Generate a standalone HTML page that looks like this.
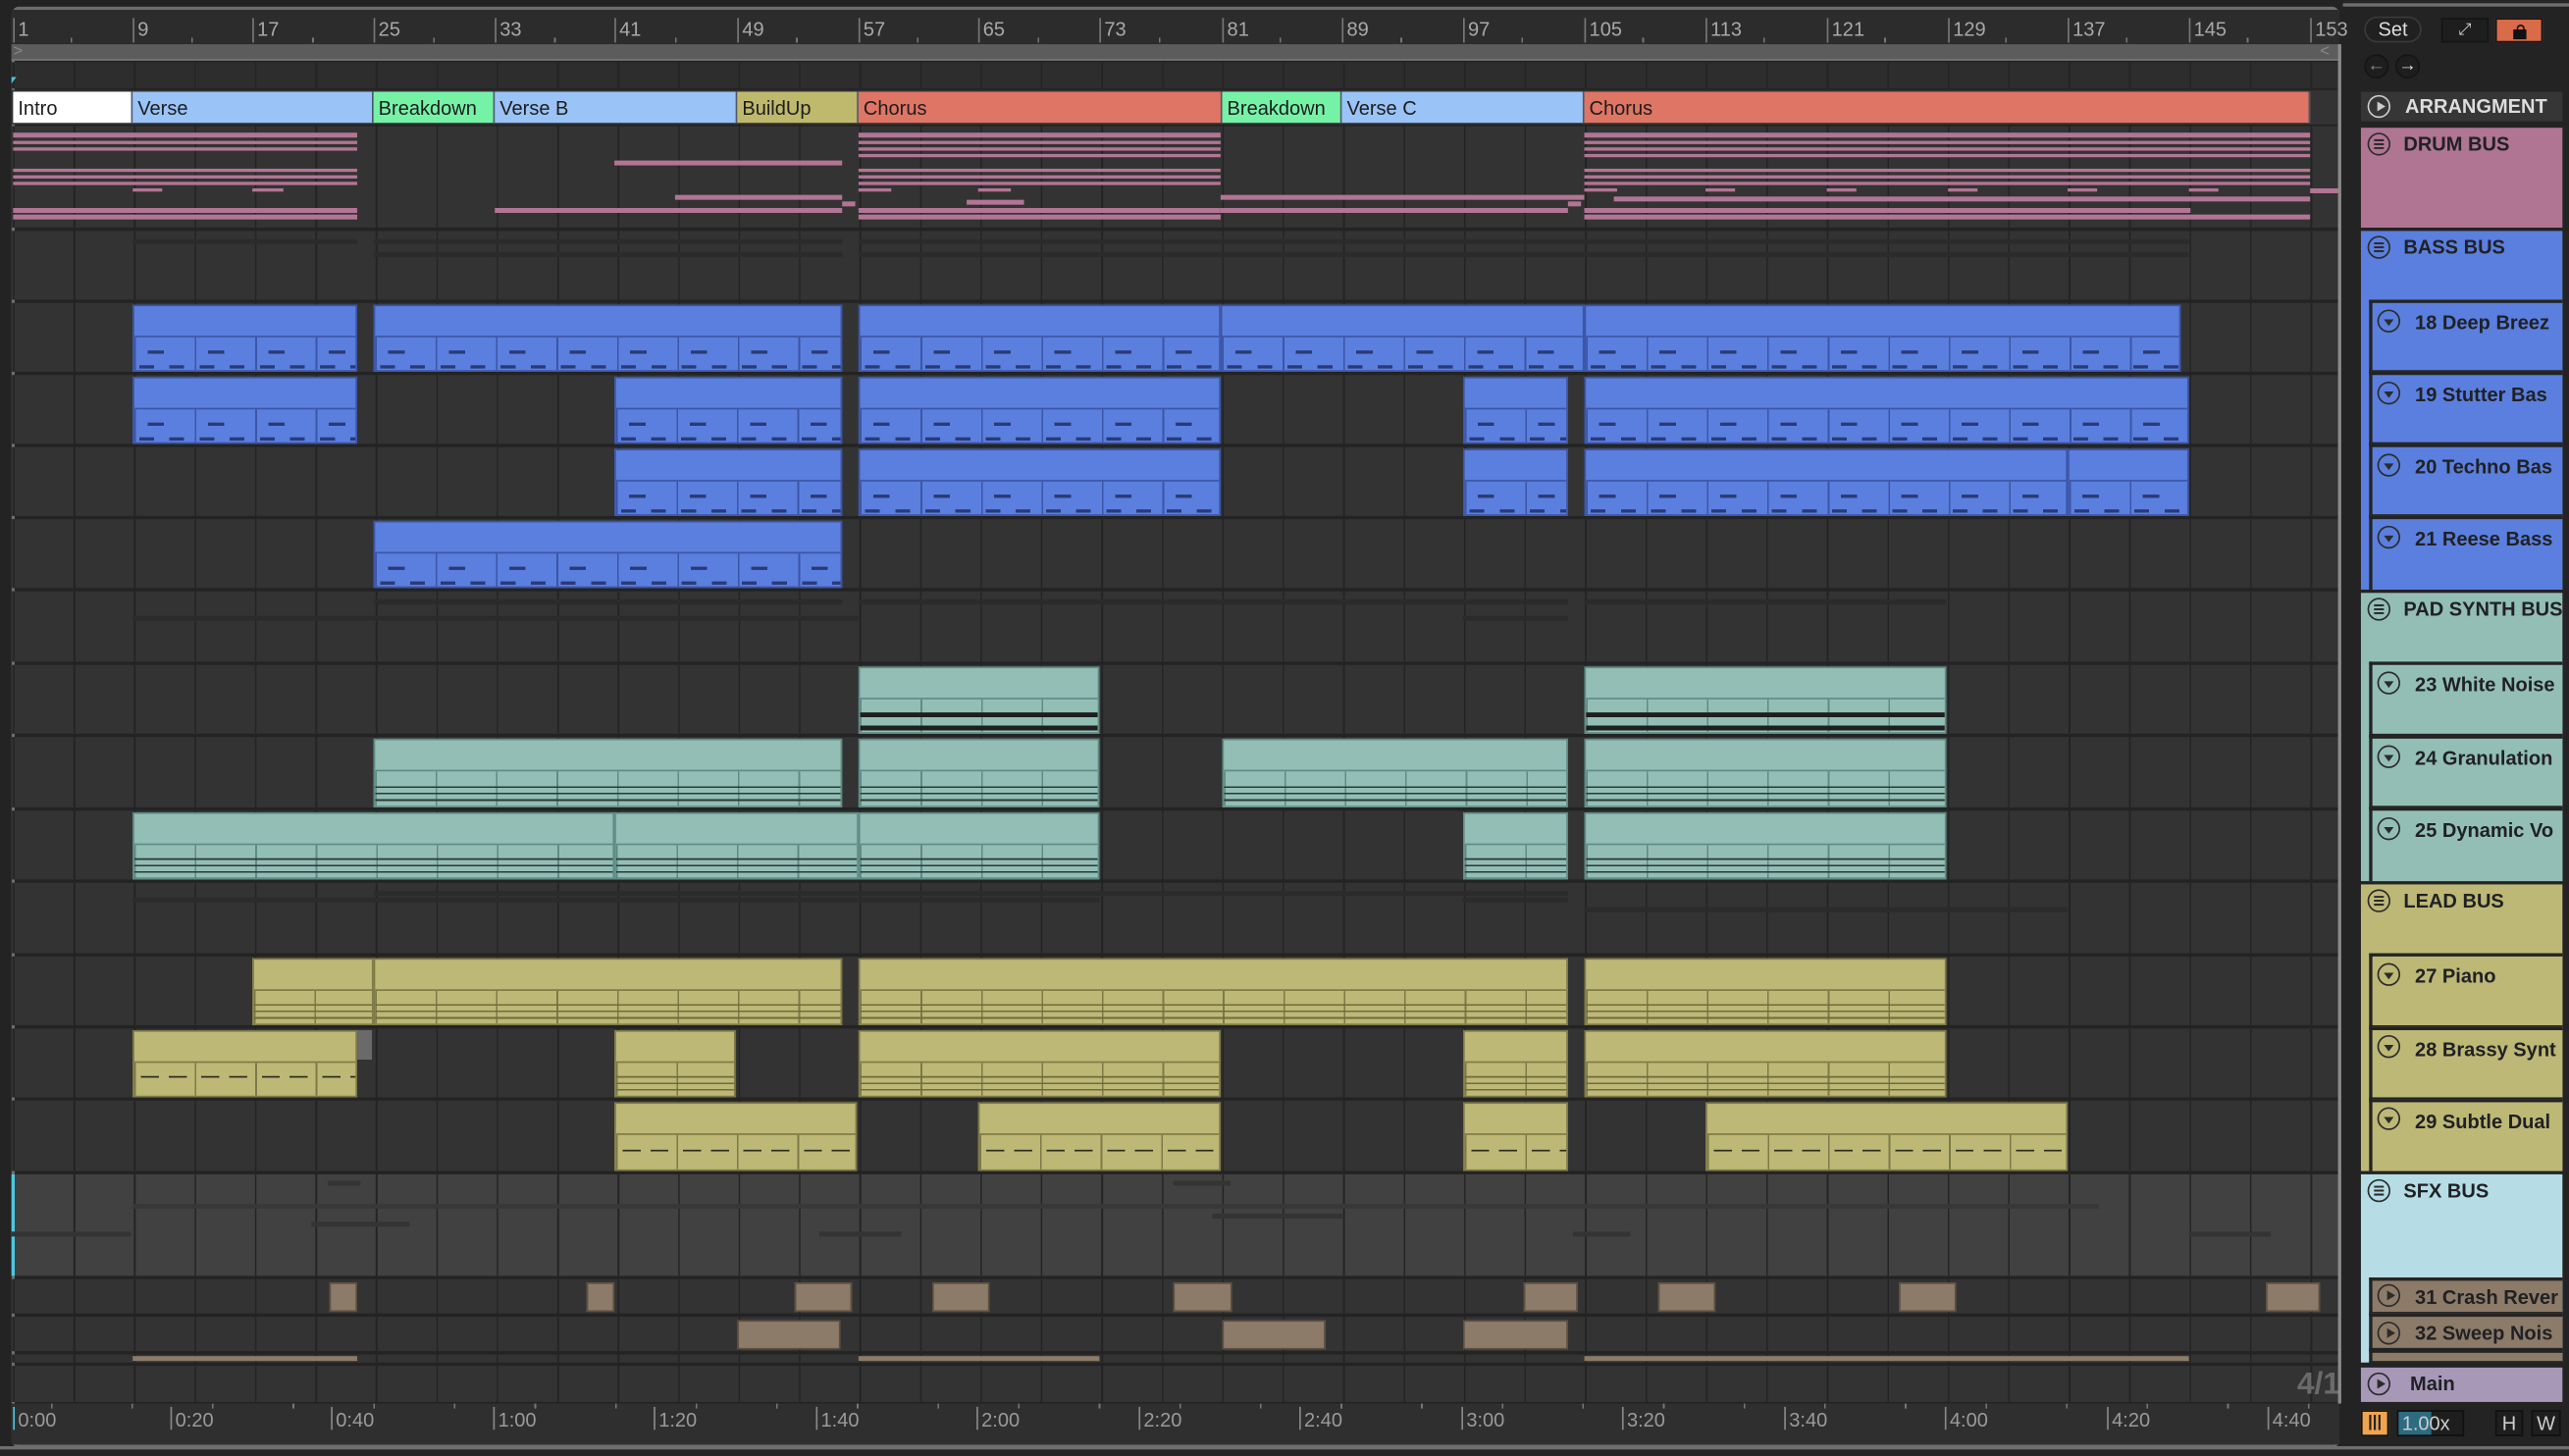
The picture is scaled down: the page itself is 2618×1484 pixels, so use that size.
<!DOCTYPE html>
<html><head><meta charset="utf-8"><style>
*{margin:0;padding:0;box-sizing:border-box}
html,body{width:2618px;height:1484px;overflow:hidden;background:#232323}
#w{position:absolute;left:0;top:0;width:1568px;height:889px;transform-origin:0 0;transform:scale(1.66964,1.66929);font-family:"Liberation Sans",sans-serif;background:#232323}
.a{position:absolute}
.lane{position:absolute;left:7px;width:1421px;background-color:#333;background-image:repeating-linear-gradient(90deg,#242424 0 1px,transparent 1px 36.9px);background-position:1px 0}
.c{position:absolute;border:1px solid var(--d);background:var(--bg);overflow:hidden}
.c::after{content:"";position:absolute;left:0;right:0;top:46%;bottom:0;border-top:1px solid var(--d);background:repeating-linear-gradient(90deg,var(--d) 0 1px,transparent 1px 36.9px)}
.c::before{content:"";position:absolute;left:0;right:0;top:70%;height:40%;background:var(--notes);z-index:1}
.b{--bg:#5b7fde;--d:#3c55a6;--notes:repeating-linear-gradient(90deg,transparent 0 8px,#2a3a78 8px 18px,transparent 18px 36.9px) 0 0/100% 2px no-repeat,repeating-linear-gradient(90deg,transparent 0 3px,#2a3a78 3px 12px,transparent 12px 18.4px) 0 9px/100% 2px no-repeat}
.t{--bg:#93beb6;--d:#5e8c84;--notes:repeating-linear-gradient(180deg,#2a3a36 0 1px,transparent 1px 4px)}
.t2{--notes:repeating-linear-gradient(180deg,#1e1e1e 0 3px,transparent 3px 8px)}
.y{--bg:#bdb876;--d:#7d7a48;--notes:repeating-linear-gradient(180deg,#6f6c3e 0 1px,transparent 1px 4px)}
.y2{--notes:repeating-linear-gradient(90deg,transparent 0 4px,#2a2a1a 4px 15px,transparent 15px 21px,#2a2a1a 21px 32px,transparent 32px 36.9px) 0 0/100% 1px no-repeat}
.s{position:absolute;background:#8c7b68;border:1px solid #5e5040}
.p{position:absolute;background:#b27595;height:2.5px}
.f{position:absolute;background:#2b2b2b;height:3px}
.loc{position:absolute;top:56px;height:19px;font-size:12px;color:#1d1d1d;padding:3px 0 0 3px;border-right:1px solid #4d5a6b;white-space:nowrap;overflow:hidden}
.num{position:absolute;top:11px;font-size:12px;color:#a8a8a8;border-left:1px solid #777;padding-left:2px;height:15px;line-height:15px}
.tm{position:absolute;top:859px;font-size:12px;color:#9a9a9a;border-left:1px solid #888;padding-left:2px;height:14px;line-height:17px}
.rp{position:absolute;left:1441px;width:123px;font-size:12px;font-weight:bold;color:#202124;white-space:nowrap;overflow:hidden}
.sub{position:absolute;left:1446px;width:118px;border:2px solid #232323;border-right:none;font-size:12px;font-weight:bold;color:#202124;padding:5px 0 0 26px;white-space:nowrap;overflow:hidden}
.ic{position:absolute;width:14px;height:14px;border:1.3px solid #2b2b2b;border-radius:50%}
.ic.d::after{content:"";position:absolute;left:3px;top:4.5px;border-left:3.2px solid transparent;border-right:3.2px solid transparent;border-top:4.5px solid #2b2b2b}
.ic.pl::after{content:"";position:absolute;left:4.5px;top:2.7px;border-top:3.3px solid transparent;border-bottom:3.3px solid transparent;border-left:5px solid #2b2b2b}
.ic.g::after{content:"";position:absolute;left:3px;top:3px;width:6px;height:6px;background:linear-gradient(#2b2b2b 0 1.2px,transparent 1.2px 2.4px,#2b2b2b 2.4px 3.6px,transparent 3.6px 4.8px,#2b2b2b 4.8px 6px)}
</style></head><body><div id="w">
<div class="a" style="left:7px;top:4px;width:1421px;height:880px;border:2px solid #6e6e6e;border-radius:5px;border-right:none"></div>
<div class="a" style="left:7px;top:6px;width:1421px;height:21px;background:#2c2c2c"></div>
<div class="num" style="left:8px">1</div><div class="num" style="left:81px">9</div><div class="num" style="left:154px">17</div><div class="num" style="left:228px">25</div><div class="num" style="left:302px">33</div><div class="num" style="left:375px">41</div><div class="num" style="left:450px">49</div><div class="num" style="left:524px">57</div><div class="num" style="left:597px">65</div><div class="num" style="left:671px">73</div><div class="num" style="left:746px">81</div><div class="num" style="left:819px">89</div><div class="num" style="left:893px">97</div><div class="num" style="left:967px">105</div><div class="num" style="left:1041px">113</div><div class="num" style="left:1115px">121</div><div class="num" style="left:1189px">129</div><div class="num" style="left:1262px">137</div><div class="num" style="left:1336px">145</div><div class="num" style="left:1410px">153</div>
<div class="a" style="left:7px;top:23px;width:1421px;height:3px;background:repeating-linear-gradient(90deg,transparent 0 36px,#777 36px 37px,transparent 37px 73.8px)"></div>
<div class="a" style="left:7px;top:27px;width:1421px;height:10px;background:#5c5c5c;border-bottom:1px solid #777"></div>
<div class="a" style="left:8px;top:27px;color:#888;font-size:10px;line-height:10px">&gt;</div>
<div class="a" style="left:1416px;top:27px;color:#888;font-size:10px;line-height:10px">&lt;</div>
<div class="lane" style="top:38px;height:16px;background-color:#2d2d2d"></div>
<div class="a" style="left:7px;top:47px;width:0;height:0;border-left:3px solid #4ec7e0;border-bottom:4px solid transparent"></div>
<div class="a" style="left:7px;top:55px;width:1421px;height:21px;background:#333"></div>
<div class="loc" style="left:8px;width:73px;background:#fff">Intro</div>
<div class="loc" style="left:81px;width:147px;background:#9ac3f7">Verse</div>
<div class="loc" style="left:228px;width:74px;background:#76f2a7">Breakdown</div>
<div class="loc" style="left:302px;width:148px;background:#9ac3f7">Verse B</div>
<div class="loc" style="left:450px;width:74px;background:#bfb96e">BuildUp</div>
<div class="loc" style="left:524px;width:222px;background:#df7564">Chorus</div>
<div class="loc" style="left:746px;width:73px;background:#76f2a7">Breakdown</div>
<div class="loc" style="left:819px;width:148px;background:#9ac3f7">Verse C</div>
<div class="loc" style="left:967px;width:443px;background:#df7564">Chorus</div>

<div class="lane" style="top:77px;height:62px"></div>
<div class="lane" style="top:141px;height:42px"></div>
<div class="lane" style="top:185px;height:42px"></div>
<div class="lane" style="top:229px;height:42px"></div>
<div class="lane" style="top:273px;height:42px"></div>
<div class="lane" style="top:317px;height:42px"></div>
<div class="lane" style="top:361px;height:43px"></div>
<div class="lane" style="top:406px;height:42px"></div>
<div class="lane" style="top:450px;height:43px"></div>
<div class="lane" style="top:495px;height:42px"></div>
<div class="lane" style="top:539px;height:43px"></div>
<div class="lane" style="top:584px;height:42px"></div>
<div class="lane" style="top:628px;height:42px"></div>
<div class="lane" style="top:672px;height:43px"></div>
<div class="lane" style="top:717px;height:62px;background-color:#414141"></div>
<div class="lane" style="top:781px;height:21px"></div>
<div class="lane" style="top:804px;height:21px"></div>
<div class="lane" style="top:827px;height:5px"></div>
<div class="lane" style="top:834px;height:22px"></div>
<div class="a" style="left:7px;top:717px;width:2px;height:62px;background:#4ec7e0"></div>

<div class="p" style="left:8px;width:210px;top:81px"></div><div class="p" style="left:8px;width:210px;top:85.5px"></div><div class="p" style="left:8px;width:210px;top:89.5px"></div>
<div class="p" style="left:8px;width:210px;top:102.5px"></div><div class="p" style="left:8px;width:210px;top:106.5px"></div><div class="p" style="left:8px;width:210px;top:110.5px"></div>
<div class="p" style="left:81px;width:18px;top:114.5px"></div><div class="p" style="left:154px;width:19px;top:114.5px"></div>
<div class="p" style="left:8px;width:210px;top:127px"></div><div class="p" style="left:8px;width:210px;top:131px"></div>
<div class="p" style="left:375px;width:139px;top:98px"></div><div class="p" style="left:412px;width:102px;top:119px"></div><div class="p" style="left:302px;width:212px;top:127px"></div><div class="p" style="left:514px;width:8px;top:123px"></div>
<div class="p" style="left:524px;width:221px;top:81px"></div><div class="p" style="left:524px;width:221px;top:85.5px"></div><div class="p" style="left:524px;width:221px;top:89.5px"></div><div class="p" style="left:524px;width:221px;top:93.5px"></div>
<div class="p" style="left:524px;width:221px;top:102.5px"></div><div class="p" style="left:524px;width:221px;top:106.5px"></div><div class="p" style="left:524px;width:221px;top:110.5px"></div><div class="p" style="left:524px;width:20px;top:114.5px"></div><div class="p" style="left:597px;width:20px;top:114.5px"></div><div class="p" style="left:590px;width:35px;top:122px"></div>
<div class="p" style="left:524px;width:221px;top:127px"></div><div class="p" style="left:524px;width:221px;top:131px"></div>
<div class="p" style="left:745px;width:222px;top:119px"></div><div class="p" style="left:745px;width:212px;top:127px"></div><div class="p" style="left:957px;width:8px;top:123px"></div><div class="p" style="left:1410px;width:18px;top:115px"></div>
<div class="p" style="left:967px;width:443px;top:81px"></div><div class="p" style="left:967px;width:443px;top:85.5px"></div><div class="p" style="left:967px;width:443px;top:89.5px"></div><div class="p" style="left:967px;width:443px;top:93.5px"></div>
<div class="p" style="left:967px;width:443px;top:102.5px"></div><div class="p" style="left:967px;width:443px;top:106.5px"></div><div class="p" style="left:967px;width:443px;top:110.5px"></div>
<div class="p" style="left:967px;width:20px;top:114.5px"></div><div class="p" style="left:1041px;width:18px;top:114.5px"></div><div class="p" style="left:1115px;width:18px;top:114.5px"></div><div class="p" style="left:1189px;width:18px;top:114.5px"></div><div class="p" style="left:1262px;width:18px;top:114.5px"></div><div class="p" style="left:1336px;width:18px;top:114.5px"></div>
<div class="p" style="left:985px;width:425px;top:120px"></div><div class="p" style="left:967px;width:370px;top:127px"></div><div class="p" style="left:967px;width:443px;top:131px"></div>

<div class="f" style="left:81px;width:137px;top:146px"></div><div class="f" style="left:228px;width:286px;top:146px"></div><div class="f" style="left:524px;width:812px;top:146px"></div><div class="f" style="left:228px;width:286px;top:154px"></div><div class="f" style="left:524px;width:812px;top:154px"></div>
<div class="f" style="left:228px;width:286px;top:366px"></div><div class="f" style="left:81px;width:443px;top:376px"></div><div class="f" style="left:524px;width:433px;top:366px"></div><div class="f" style="left:967px;width:221px;top:366px"></div><div class="f" style="left:893px;width:64px;top:376px"></div>
<div class="f" style="left:81px;width:590px;top:548px"></div><div class="f" style="left:228px;width:729px;top:544px"></div><div class="f" style="left:967px;width:295px;top:554px"></div><div class="f" style="left:893px;width:64px;top:548px"></div>
<div class="f" style="left:7px;width:73px;top:752px;background:#343434"></div><div class="f" style="left:190px;width:60px;top:746px;background:#343434"></div><div class="f" style="left:81px;width:1200px;top:735px;background:#383838"></div><div class="f" style="left:200px;width:20px;top:721px;background:#343434"></div><div class="f" style="left:500px;width:50px;top:752px;background:#343434"></div><div class="f" style="left:716px;width:35px;top:721px;background:#343434"></div><div class="f" style="left:740px;width:80px;top:741px;background:#343434"></div><div class="f" style="left:960px;width:35px;top:752px;background:#343434"></div><div class="f" style="left:1336px;width:50px;top:752px;background:#343434"></div>

<div class="c b" style="left:81px;top:186px;width:137px;height:41px"></div>
<div class="c b" style="left:228px;top:186px;width:286px;height:41px"></div>
<div class="c b" style="left:524px;top:186px;width:221px;height:41px"></div>
<div class="c b" style="left:745px;top:186px;width:222px;height:41px"></div>
<div class="c b" style="left:967px;top:186px;width:364px;height:41px"></div>
<div class="c b" style="left:81px;top:230px;width:137px;height:41px"></div>
<div class="c b" style="left:375px;top:230px;width:139px;height:41px"></div>
<div class="c b" style="left:524px;top:230px;width:221px;height:41px"></div>
<div class="c b" style="left:893px;top:230px;width:64px;height:41px"></div>
<div class="c b" style="left:967px;top:230px;width:369px;height:41px"></div>
<div class="c b" style="left:375px;top:274px;width:139px;height:41px"></div>
<div class="c b" style="left:524px;top:274px;width:221px;height:41px"></div>
<div class="c b" style="left:893px;top:274px;width:64px;height:41px"></div>
<div class="c b" style="left:967px;top:274px;width:295px;height:41px"></div>
<div class="c b" style="left:1262px;top:274px;width:74px;height:41px"></div>
<div class="c b" style="left:228px;top:318px;width:286px;height:41px"></div>
<div class="c t t2" style="left:524px;top:407px;width:147px;height:41px"></div>
<div class="c t t2" style="left:967px;top:407px;width:221px;height:41px"></div>
<div class="c t" style="left:228px;top:451px;width:286px;height:42px"></div>
<div class="c t" style="left:524px;top:451px;width:147px;height:42px"></div>
<div class="c t" style="left:746px;top:451px;width:211px;height:42px"></div>
<div class="c t" style="left:967px;top:451px;width:221px;height:42px"></div>
<div class="c t" style="left:81px;top:496px;width:294px;height:41px"></div>
<div class="c t" style="left:375px;top:496px;width:149px;height:41px"></div>
<div class="c t" style="left:524px;top:496px;width:147px;height:41px"></div>
<div class="c t" style="left:893px;top:496px;width:64px;height:41px"></div>
<div class="c t" style="left:967px;top:496px;width:221px;height:41px"></div>
<div class="c y" style="left:154px;top:585px;width:74px;height:41px"></div>
<div class="c y" style="left:228px;top:585px;width:286px;height:41px"></div>
<div class="c y" style="left:524px;top:585px;width:433px;height:41px"></div>
<div class="c y" style="left:967px;top:585px;width:221px;height:41px"></div>
<div class="c y y2" style="left:81px;top:629px;width:137px;height:41px"></div>
<div class="a" style="left:218px;top:629px;width:9px;height:18px;background:#6a6a6a"></div>
<div class="c y" style="left:375px;top:629px;width:74px;height:41px"></div>
<div class="c y" style="left:524px;top:629px;width:221px;height:41px"></div>
<div class="c y" style="left:893px;top:629px;width:64px;height:41px"></div>
<div class="c y" style="left:967px;top:629px;width:221px;height:41px"></div>
<div class="c y y2" style="left:375px;top:673px;width:148px;height:42px"></div>
<div class="c y y2" style="left:597px;top:673px;width:148px;height:42px"></div>
<div class="c y y2" style="left:893px;top:673px;width:64px;height:42px"></div>
<div class="c y y2" style="left:1041px;top:673px;width:221px;height:42px"></div>
<div class="s" style="left:201px;top:783px;width:17px;height:18px"></div><div class="s" style="left:358px;top:783px;width:17px;height:18px"></div><div class="s" style="left:485px;top:783px;width:35px;height:18px"></div><div class="s" style="left:569px;top:783px;width:35px;height:18px"></div><div class="s" style="left:716px;top:783px;width:36px;height:18px"></div><div class="s" style="left:930px;top:783px;width:33px;height:18px"></div><div class="s" style="left:1012px;top:783px;width:35px;height:18px"></div><div class="s" style="left:1159px;top:783px;width:35px;height:18px"></div><div class="s" style="left:1383px;top:783px;width:33px;height:18px"></div>
<div class="s" style="left:450px;top:806px;width:63px;height:18px"></div><div class="s" style="left:746px;top:806px;width:63px;height:18px"></div><div class="s" style="left:893px;top:806px;width:64px;height:18px"></div>
<div class="s" style="left:81px;top:828px;width:137px;height:3px;border:none"></div><div class="s" style="left:524px;top:828px;width:147px;height:3px;border:none"></div><div class="s" style="left:967px;top:828px;width:369px;height:3px;border:none"></div>
<div class="a" style="left:1402px;top:835px;font-size:19px;font-weight:bold;color:#6a6a6a">4/1</div>
<div class="a" style="left:1427px;top:27px;width:1.5px;height:830px;background:#8a8a8a"></div>
<div class="a" style="left:7px;top:857px;width:1421px;height:25px;background:#2f2f2f"></div>
<div class="a" style="left:7px;top:857px;width:1421px;height:3px;background:repeating-linear-gradient(90deg,transparent 0 24px,#777 24px 25px,transparent 25px 49.2px)"></div>
<div class="tm" style="left:8px;border-color:#4ec7e0">0:00</div><div class="tm" style="left:104px">0:20</div><div class="tm" style="left:202px">0:40</div><div class="tm" style="left:301px">1:00</div><div class="tm" style="left:399px">1:20</div><div class="tm" style="left:498px">1:40</div><div class="tm" style="left:596px">2:00</div><div class="tm" style="left:695px">2:20</div><div class="tm" style="left:793px">2:40</div><div class="tm" style="left:892px">3:00</div><div class="tm" style="left:990px">3:20</div><div class="tm" style="left:1089px">3:40</div><div class="tm" style="left:1187px">4:00</div><div class="tm" style="left:1286px">4:20</div><div class="tm" style="left:1384px">4:40</div>
<div class="a" style="left:0;top:883px;width:1568px;height:6px;background:#262626;border-top:2px solid #6e6e6e"></div>

<div class="a" style="left:1430px;top:0;width:138px;height:4px;background:#262626;border-bottom:2px solid #6e6e6e"></div>
<div class="a" style="left:1443px;top:10px;width:35px;height:16px;border-radius:8px;background:#202020;border:1px solid #3a3a3a;color:#ddd;font-size:12px;text-align:center;line-height:14px">Set</div>
<div class="a" style="left:1490px;top:11px;width:29px;height:15px;background:#1e1e1e;border:1px solid #151515;color:#ddd;font-size:10px;text-align:center;line-height:13px">&#x2922;</div>
<div class="a" style="left:1523px;top:11px;width:29px;height:15px;background:#d96b48;border:1px solid #151515"><div class="a" style="left:10px;top:6px;width:8px;height:6px;background:#111"></div><div class="a" style="left:11.5px;top:2.5px;width:5px;height:5px;border:1.3px solid #111;border-bottom:none;border-radius:3px 3px 0 0"></div></div>
<div class="a" style="left:1443px;top:33px;width:15px;height:15px;border-radius:50%;background:#1e1e1e;border:1px solid #151515;color:#888;font-size:11px;line-height:13px;text-align:center">&#x2190;</div>
<div class="a" style="left:1462px;top:33px;width:15px;height:15px;border-radius:50%;background:#1e1e1e;border:1px solid #151515;color:#ddd;font-size:11px;line-height:13px;text-align:center">&#x2192;</div>
<div class="rp" style="top:56px;height:18px;background:#363636;color:#ddd;padding:2px 0 0 27px">ARRANGMENT</div>
<div class="ic" style="left:1445px;top:58px;border-color:#ccc"></div>
<div class="a" style="left:1450.5px;top:61.5px;border-top:3.3px solid transparent;border-bottom:3.3px solid transparent;border-left:5px solid #ccc"></div>
<div class="rp" style="top:78px;height:61px;background:#b07593;padding:3px 0 0 26px">DRUM BUS</div><div class="ic g" style="left:1445px;top:81px"></div>
<div class="rp" style="top:141px;height:219px;background:#5b7fde;padding:3px 0 0 26px">BASS BUS</div><div class="ic g" style="left:1445px;top:144px"></div>
<div class="sub" style="top:183px;height:45px;background:#5b7fde">18 Deep Breez</div><div class="ic d" style="left:1451px;top:189px"></div>
<div class="sub" style="top:227px;height:45px;background:#5b7fde">19 Stutter Bas</div><div class="ic d" style="left:1451px;top:233px"></div>
<div class="sub" style="top:271px;height:45px;background:#5b7fde">20 Techno Bas</div><div class="ic d" style="left:1451px;top:277px"></div>
<div class="sub" style="top:315px;height:45px;background:#5b7fde;border-bottom:none">21 Reese Bass</div><div class="ic d" style="left:1451px;top:321px"></div>
<div class="rp" style="top:362px;height:176px;background:#93beb6;padding:3px 0 0 26px">PAD SYNTH BUS</div><div class="ic g" style="left:1445px;top:365px"></div>
<div class="sub" style="top:404px;height:46px;background:#93beb6">23 White Noise</div><div class="ic d" style="left:1451px;top:410px"></div>
<div class="sub" style="top:449px;height:45px;background:#93beb6">24 Granulation</div><div class="ic d" style="left:1451px;top:455px"></div>
<div class="sub" style="top:493px;height:45px;background:#93beb6;border-bottom:none">25 Dynamic Vo</div><div class="ic d" style="left:1451px;top:499px"></div>
<div class="rp" style="top:540px;height:175px;background:#bdb876;padding:3px 0 0 26px">LEAD BUS</div><div class="ic g" style="left:1445px;top:543px"></div>
<div class="sub" style="top:582px;height:46px;background:#bdb876">27 Piano</div><div class="ic d" style="left:1451px;top:588px"></div>
<div class="sub" style="top:627px;height:45px;background:#bdb876">28 Brassy Synt</div><div class="ic d" style="left:1451px;top:632px"></div>
<div class="sub" style="top:671px;height:44px;background:#bdb876;border-bottom:none">29 Subtle Dual</div><div class="ic d" style="left:1451px;top:676px"></div>
<div class="rp" style="top:717px;height:115px;background:#b6dde6;padding:3px 0 0 26px">SFX BUS</div><div class="ic g" style="left:1445px;top:720px"></div>
<div class="sub" style="top:780px;height:23px;background:#8c7b68;padding-top:3px">31 Crash Rever</div><div class="ic pl" style="left:1451px;top:784px"></div>
<div class="sub" style="top:802px;height:23px;background:#8c7b68;padding-top:3px">32 Sweep Nois</div><div class="ic pl" style="left:1451px;top:807px"></div>
<div class="sub" style="top:824px;height:8px;background:#8c7b68"></div>
<div class="a" style="left:1441px;top:832px;width:127px;height:3px;background:#232323"></div>
<div class="rp" style="top:835px;height:21px;background:#a898b8;padding:3px 0 0 30px">Main</div><div class="ic pl" style="left:1445px;top:838px"></div>
<div class="a" style="left:1441px;top:861px;width:17px;height:16px;background:#f0a44f;border:1px solid #111;font-size:10px;line-height:14px;text-align:center;color:#222;font-weight:bold">|||</div>
<div class="a" style="left:1463px;top:861px;width:41px;height:16px;background:#1e1e1e;border:1px solid #111;color:#ccc;font-size:12px;line-height:14px;padding-left:2px"><span style="position:absolute;left:0;top:0;width:20px;height:14px;background:#2d6b80"></span><span style="position:relative">1.00x</span></div>
<div class="a" style="left:1523px;top:861px;width:17px;height:16px;background:#1e1e1e;border:1px solid #111;color:#ccc;font-size:12px;line-height:14px;text-align:center">H</div>
<div class="a" style="left:1545px;top:861px;width:18px;height:16px;background:#1e1e1e;border:1px solid #111;color:#ccc;font-size:12px;line-height:14px;text-align:center">W</div>
</div></body></html>
